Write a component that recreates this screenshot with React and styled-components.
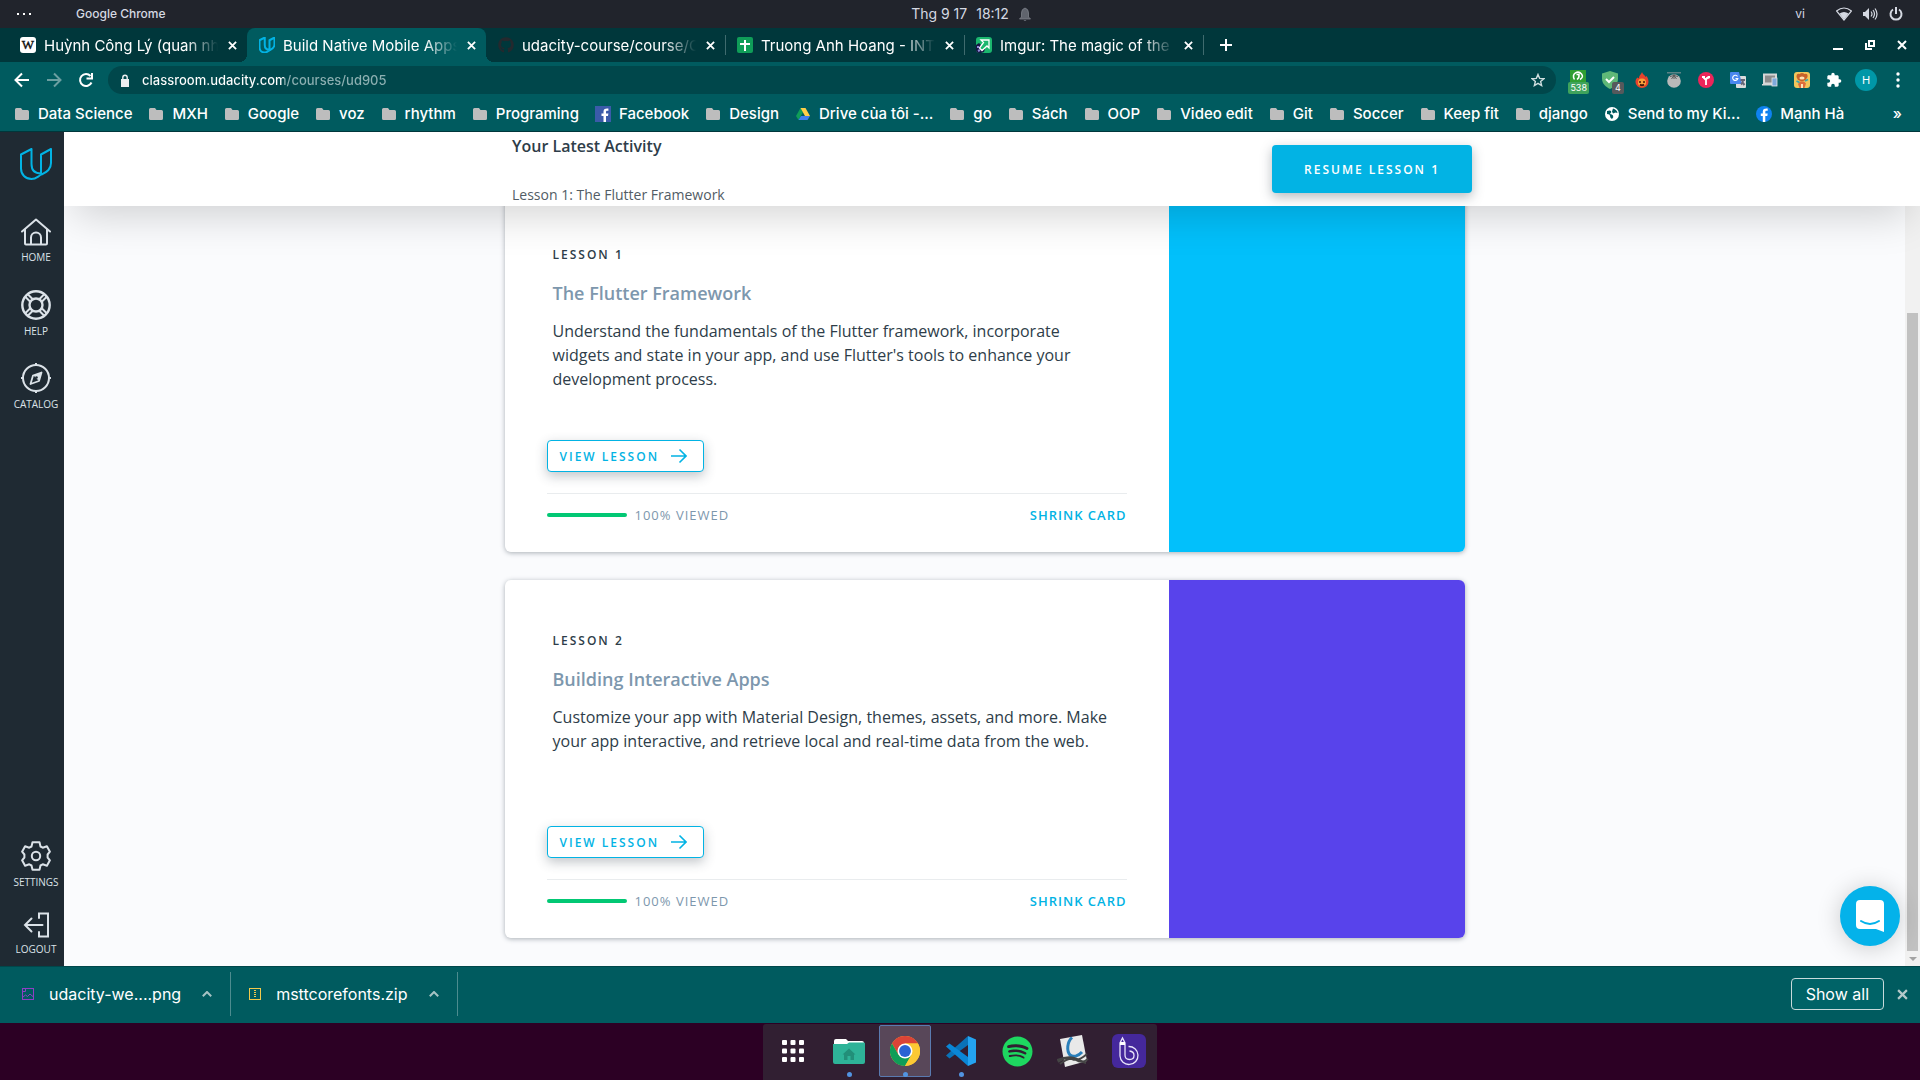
import React from "react";
import styled, { createGlobalStyle, css } from "styled-components";
import { FaGithub, FaSpotify } from "react-icons/fa";

const teal = "#005b5f";
const ui = `Inter, "Noto Sans", sans-serif`;
const body = `"Open Sans", "Noto Sans", sans-serif`;

const Global = createGlobalStyle`
  * { box-sizing: border-box; }
  body { margin: 0; background: #2c0024; font-family: ${ui}; }
  button, input { font: inherit; color: inherit; border: 0; padding: 0; margin: 0; background: none; }
  a { color: inherit; text-decoration: none; }
  h2, h3, p { margin: 0; }
  svg { display: block; flex: none; }
`;

const Screen = styled.div`
  display: flex;
  flex-direction: column;
  height: 100vh;
  min-height: 640px;
  overflow: hidden;
`;

/* ---------- desktop top bar ---------- */
const TopBar = styled.header`
  display: grid;
  grid-template-columns: 1fr auto 1fr;
  align-items: center;
  height: 28px;
  flex: none;
  padding: 0 17px 0 16px;
  background: #21242c;
  color: #d5d9e2;
  font-size: 12px;
  line-height: 16px;
`;
const TopGroup = styled.div`
  display: flex;
  align-items: center;
  gap: 11px;
  justify-content: ${(p) => p.$align || "flex-start"};
`;
const Clock = styled.div`
  display: flex;
  align-items: center;
  gap: 9px;
  padding-left: 24px;
  font-size: 14px;
`;
const AppName = styled.span`
  margin-left: 33px;
  font-weight: 500;
`;
const Locale = styled.span`
  margin-right: 20px;
`;

/* ---------- tab strip ---------- */
const TabStrip = styled.nav`
  display: flex;
  align-items: center;
  height: 34px;
  flex: none;
  padding: 0 10px 0 8px;
  background: #00373b;
  color: #fff;
`;
const flare = css`
  content: "";
  position: absolute;
  bottom: 0;
  width: 8px;
  height: 8px;
`;
const Tab = styled.div`
  position: relative;
  display: flex;
  align-items: center;
  gap: 8px;
  width: 239px;
  height: 34px;
  padding: 0 9px 0 12px;
  border-radius: 8px 8px 0 0;
  background: ${(p) => (p.$active ? teal : "transparent")};
  ${(p) =>
    p.$active &&
    css`
      &::before { ${flare} left: -8px; background: radial-gradient(circle at 0 0, transparent 8px, ${teal} 8px); }
      &::after { ${flare} right: -8px; background: radial-gradient(circle at 100% 0, transparent 8px, ${teal} 8px); }
    `}
`;
const TabTitle = styled.a`
  flex: 1;
  min-width: 0;
  padding-top: 2px;
  overflow: hidden;
  white-space: nowrap;
  font-size: 15px;
  line-height: 22px;
  mask-image: linear-gradient(to right, #000 calc(100% - 32px), transparent);
`;
const IconButton = styled.button`
  display: grid;
  place-items: center;
  flex: none;
  width: ${(p) => p.$w || 16}px;
  height: 16px;
  color: ${(p) => p.$color || "#fff"};
`;
const Separator = styled.span`
  width: 1px;
  height: 20px;
  flex: none;
  margin-right: -1px;
  background: #3f6b6e;
`;
const NewTab = styled(IconButton)`
  margin-left: 15px;
`;
const WindowButtons = styled.div`
  display: flex;
  gap: 16px;
  margin-left: auto;
`;

/* ---------- toolbar ---------- */
const Toolbar = styled.div`
  display: flex;
  align-items: center;
  height: 34px;
  flex: none;
  padding: 2px 10px 0 14px;
  background: ${teal};
  color: #fff;
`;
const NavButtons = styled.div`
  display: flex;
  gap: 16px;
  margin-right: 14px;
`;
const Omnibox = styled.label`
  display: flex;
  align-items: center;
  flex: 1;
  height: 28px;
  padding: 0 10px 0 12px;
  gap: 12px;
  border-radius: 14px;
  background: #00474b;
`;
const Address = styled.input`
  flex: 1;
  min-width: 0;
  outline: none;
  font-size: 13px;
  font-weight: 500;
  line-height: 20px;
  color: transparent;
  background: linear-gradient(to right, #fff 142px, #8db0b2 142px);
  background-clip: text;
  -webkit-background-clip: text;
`;
const Extensions = styled.div`
  display: flex;
  align-items: center;
  gap: 8px;
  margin-left: 10px;
`;
const Ext = styled.button`
  position: relative;
  display: grid;
  place-items: center;
  width: 24px;
  height: 28px;
`;
const Badge = styled.span`
  position: absolute;
  right: ${(p) => p.$right}px;
  bottom: 0;
  padding: 0 2px;
  min-width: 12px;
  border-radius: 2px;
  background: ${(p) => p.$bg};
  color: #fff;
  font-size: 9px;
  line-height: 12px;
`;
const Avatar = styled.span`
  display: grid;
  place-items: center;
  width: 22px;
  height: 22px;
  border-radius: 50%;
  background: #0097a7;
  font-size: 11px;
`;

/* ---------- bookmarks ---------- */
const Bookmarks = styled.nav`
  display: flex;
  align-items: center;
  gap: 16px;
  height: 36px;
  flex: none;
  padding: 0 18px 0 14px;
  background: ${teal};
  border-bottom: 1px solid #00373b;
  color: #fff;
  font-size: 15px;
  font-weight: 500;
  line-height: 20px;
`;
const Bookmark = styled.a`
  display: flex;
  align-items: center;
  gap: 8px;
  white-space: nowrap;
`;
const More = styled.button`
  margin-left: auto;
`;

/* ---------- page ---------- */
const Page = styled.div`
  display: grid;
  grid-template-columns: 64px minmax(0, 1fr);
  flex: 1;
  min-height: 0;
  overflow: hidden;
  position: relative;
  background: #fafbfd;
  font-family: ${body};
  color: #2e3d49;
`;
const Sidebar = styled.nav`
  position: relative;
  z-index: 3;
  display: flex;
  flex-direction: column;
  align-items: center;
  padding: 16px 0 11px 8px;
  background: #1f2a33;
  color: #dbe2e8;
`;
const Logo = styled.a`
  margin-bottom: 38px;
`;
const SideLink = styled.a`
  display: flex;
  flex-direction: column;
  align-items: center;
  gap: 5px;
  margin-bottom: ${(p) => p.$gap || 0}px;
  font-size: 10px;
  line-height: 12px;
`;
const Spacer = styled.span`
  flex: 1;
`;
const Main = styled.main`
  display: flex;
  flex-direction: column;
  min-height: 0;
  min-width: 0;
`;
const Activity = styled.section`
  position: relative;
  z-index: 2;
  height: 74px;
  flex: none;
  background: #fff;
  box-shadow: 0 20px 40px -10px rgba(0, 0, 0, 0.17);
`;
const ActivityInner = styled.div`
  display: flex;
  justify-content: space-between;
  align-items: center;
  max-width: 960px;
  height: 100%;
  margin: 0 auto;
`;
const ActivityText = styled.div`
  display: flex;
  flex-direction: column;
  justify-content: space-between;
  height: 100%;
  padding-top: 2px;
`;
const ActivityTitle = styled.h2`
  font-size: 16px;
  font-weight: 600;
  line-height: 24px;
`;
const ActivityLesson = styled.p`
  color: #525c65;
  font-size: 14px;
  line-height: 22px;
`;
const Resume = styled.button`
  height: 48px;
  padding: 0 32px;
  border-radius: 4px;
  background: #02b3e4;
  color: #fff;
  font-size: 12px;
  font-weight: 600;
  letter-spacing: 2px;
  box-shadow: 0 4px 12px rgba(46, 61, 73, 0.35);
`;
const Body = styled.div`
  display: flex;
  flex: 1;
  min-height: 0;
`;
const Lessons = styled.div`
  display: flex;
  flex: 1;
  flex-direction: column;
  justify-content: flex-end;
  align-items: center;
  gap: 28px;
  padding-bottom: 28px;
`;
const Card = styled.article`
  display: grid;
  grid-template-columns: minmax(0, 1fr) 296px;
  flex: none;
  width: 100%;
  max-width: 960px;
  border-radius: 6px;
  overflow: hidden;
  background: #fff;
  box-shadow: 0 1px 5px rgba(46, 61, 73, 0.4);
`;
const CardBody = styled.div`
  padding: 52px 42px 27px;
`;
const CardText = styled.div`
  padding: 0 12px 0 6px;
`;
const Overline = styled.p`
  font-size: 12px;
  font-weight: 600;
  letter-spacing: 2px;
  line-height: 18px;
`;
const Title = styled.h3`
  margin: 17px 0 14px;
  color: #7d97ad;
  font-size: 18px;
  font-weight: 600;
  line-height: 24px;
`;
const Desc = styled.p`
  min-height: 72px;
  font-size: 16px;
  line-height: 24px;
`;
const ViewButton = styled.button`
  display: flex;
  align-items: center;
  gap: 12px;
  height: 32px;
  margin: 49px 0 21px;
  padding: 0 16px 0 12px;
  border: 1px solid #02b3e4;
  border-radius: 4px;
  background: #fff;
  color: #02b3e4;
  font-size: 12px;
  font-weight: 600;
  letter-spacing: 2px;
  box-shadow: 0 4px 12px rgba(46, 61, 73, 0.3);
`;
const CardFoot = styled.div`
  display: flex;
  align-items: center;
  gap: 8px;
  padding-top: 11px;
  border-top: 1px solid #e9ecee;
  font-size: 13px;
  line-height: 20px;
`;
const Track = styled.div`
  width: 80px;
  height: 4px;
  border-radius: 2px;
  overflow: hidden;
  background: #dbe2e8;
`;
const Fill = styled.div`
  height: 100%;
  background: #02c874;
`;
const Viewed = styled.span`
  color: #7d97ad;
  letter-spacing: 1px;
`;
const Shrink = styled.button`
  margin-left: auto;
  color: #02b3e4;
  font-weight: 600;
  letter-spacing: 1px;
`;
const Swatch = styled.div`
  background: ${(p) => p.$c};
`;
const Scrollbar = styled.div`
  display: flex;
  flex-direction: column;
  align-items: center;
  justify-content: flex-end;
  width: 15px;
  flex: none;
  background: #f1f1f1;
`;
const Thumb = styled.div`
  width: 11px;
  height: 84%;
  background: #c1c1c1;
`;
const ScrollArrow = styled.span`
  display: grid;
  place-items: center;
  height: 15px;
`;
const Chat = styled.button`
  position: absolute;
  right: 20px;
  bottom: 20px;
  z-index: 3;
  display: grid;
  place-items: center;
  width: 60px;
  height: 60px;
  border-radius: 50%;
  background: #04b2ea;
  box-shadow: 0 2px 24px rgba(0, 0, 0, 0.2);
`;

/* ---------- downloads ---------- */
const Downloads = styled.section`
  display: flex;
  align-items: center;
  height: 57px;
  flex: none;
  padding: 0 10px 2px 22px;
  background: ${teal};
  border-top: 1px solid #00474b;
  color: #fff;
  font-size: 16px;
  line-height: 24px;
`;
const Download = styled.div`
  display: flex;
  align-items: center;
  gap: 15px;
  height: 44px;
  margin-right: 18px;
  padding-right: 15px;
  border-right: 1px solid #4d8c8f;
`;
const FileName = styled.a`
  margin-right: 3px;
`;
const ShowAll = styled.button`
  height: 32px;
  margin-left: auto;
  margin-right: 10px;
  padding: 0 14px;
  border: 1px solid #c7dadb;
  border-radius: 4px;
  background: #006367;
`;

/* ---------- dock ---------- */
const DockBar = styled.footer`
  display: flex;
  justify-content: center;
  height: 57px;
  flex: none;
  padding-top: 1px;
  background: #2c0024;
`;
const Dock = styled.div`
  display: flex;
  gap: 4px;
  padding: 1px 2px 0 4px;
  border-radius: 3px 3px 0 0;
  background: #311f32;
`;
const DockItem = styled.button`
  position: relative;
  display: grid;
  place-items: center;
  width: 52px;
  height: 52px;
  border: 1px solid ${(p) => (p.$active ? "#5a7ab0" : "transparent")};
  border-radius: 2px;
  background: ${(p) => (p.$active ? "#584759" : "transparent")};
  &::after {
    content: "";
    display: ${(p) => (p.$running ? "block" : "none")};
    position: absolute;
    bottom: -1px;
    width: 5px;
    height: 5px;
    border-radius: 50%;
    background: #5294e2;
  }
`;

/* ---------- drawings ---------- */
const S = ({ w = 16, h = w, vb, children, sw = 2, ...rest }) => (
  <svg width={w} height={h} viewBox={vb || `0 0 ${w} ${h}`} fill="none" stroke="currentColor" strokeWidth={sw} aria-hidden="true" {...rest}>
    {children}
  </svg>
);
const F = (props) => <S {...props} stroke="none" />;

const Cross = ({ s = 8, sw = 2 }) => <S w={s} sw={sw} vb="0 0 8 8"><path d="M.8.8l6.4 6.4M7.2.8L.8 7.2" /></S>;
const Folder = () => <F><path d="M1 3.500Q1 2 2.500 2H7l1.500 2H13.500Q15 4 15 5.500V12.500Q15 14 13.500 14H2.500Q1 14 1 12.500z" fill="#bdbdbd" /></F>;
const UMark = ({ w = 32, sw = 2 }) => (
  <S w={w} vb="0 0 32 32" sw={sw} stroke="#02b3e4" strokeLinejoin="round">
    <path d="M1 6.500L11.500 1V16C11.500 22 15 25.500 21 25.500V6.500L31 1V15C31 22 26 24 21.500 26.500C17 29 16 31 11.500 31C5.500 31 1 26.500 1 20.500Z" />
  </S>
);
const Wiki = () => (
  <F>
    <rect width="16" height="16" rx="3" fill="#fff" />
    <text x="8" y="12" textAnchor="middle" fontFamily="Liberation Serif, serif" fontSize="13" stroke="#111" strokeWidth=".4" fill="#111">W</text>
  </F>
);
const Sheet = () => <F><rect width="16" height="16" rx="2" fill="#0f9d58" /><path d="M7 3h2v3h4v2H9v6H7V8H3V6h4z" fill="#fff" /></F>;
const Imgur = () => (
  <F>
    <rect width="16" height="16" rx="3" fill="#1bb76e" />
    <path d="M0 8l3-2 2 2 4 4-1 3-3 1H3q-3 0-3-3z" fill="#171544" />
    <path d="M5 3h8v8l-2-2-5 4.500L3.500 11 7.500 5.500z" fill="#1bb76e" stroke="#fff" strokeWidth="1.300" />
    <path d="M1 10h2M2 14l2-1" stroke="#8f8bd8" />
  </F>
);
const FbSquare = () => <F><rect width="16" height="16" fill="#3b5ba9" /><path d="M11 16V10h2l.4-2.500H11V6c0-.8.4-1.200 1.200-1.200h1.200V2.600C12 2.300 8.500 2.200 8.500 5.500v2H6.500V10h2v6z" fill="#fff" /></F>;
const FbRound = () => <F><circle cx="8" cy="8" r="8" fill="#0f82f0" /><path d="M9.300 16V10h2l.4-2.500H9.300V6c0-.8.4-1.200 1.200-1.200h1.200V2.600C10.300 2.300 6.800 2.200 6.800 5.500v2H4.800V10h2v6z" fill="#fff" /></F>;
const Drive = () => (
  <F>
    <path d="M5.500 2L8 6.200 3.500 14 1 10z" fill="#0f9d58" />
    <path d="M5.500 2h5L15 10h-5z" fill="#ffcf48" />
    <path d="M6 10h9l-2.500 4h-9z" fill="#3f7ff0" />
  </F>
);
const Globe = () => <F><circle cx="8" cy="8" r="7" fill="#fff" /><path d="M3 5q3-1 4 0t-1 3q2 0 3 1.500T8 13Q6 12 6 10T3 8zM9 2.500q4 1 4.500 4.500l-2-.5-2.500 1-1-2z" fill={teal} /></F>;

const Gauge = () => (
  <F w={20} h={22}>
    <rect x="2" y="1" width="16" height="12" fill="#2f9e32" />
    <g stroke="#fff" strokeWidth="1.500" fill="none"><path d="M6.500 10.500Q4 6 7.500 3.800Q11 2 13.500 5t-1.500 5.500M8.500 5.500h2.500q.5 3-2 5" /></g>
  </F>
);
const Shield = () => <F w={18} vb="0 0 18 18"><path d="M9 0l8 2.500v5C17 13 13 16 9 18 5 16 1 13 1 7.500v-5z" fill="#5fb878" /><path d="M5 8l3 3 5-5" stroke="#fff" strokeWidth="2" fill="none" /></F>;
const Flame = () => (
  <F>
    <path d="M8 0c1 3 3 3 3.500 5l1-1C14 6 14.500 8 14.500 10a6.500 6 0 0 1-13 0c0-2 .5-3 2-4.500L5 6.500C5 3 7 3 8 0z" fill="#e8412b" />
    <circle cx="8" cy="10.500" r="4" fill="#f9a13a" /><circle cx="6" cy="10" r="1" fill="#40140b" /><circle cx="10" cy="10" r="1" fill="#40140b" />
    <path d="M6 12.500q2 1.500 4 0" stroke="#40140b" fill="none" />
  </F>
);
const Tomato = () => <F w={16}><path d="M1 .5h14" stroke="#5b8386" /><circle cx="8" cy="9" r="6.800" fill="#b9b9b9" /><path d="M8 2v5M4 4.500l4-1 4 1M5.500 7L8 3.500 10.500 7" stroke="#555" strokeWidth=".9" fill="none" /></F>;
const Pink = () => <F><circle cx="8" cy="8" r="8" fill="#ec255a" /><path d="M8 13V7.500M8 8L5.500 5.500M8 8q0-2.500 3.500-2.500M4 5h3M9.500 5h2.500" stroke="#fff" strokeWidth="1.800" fill="none" /></F>;
const Translate = () => (
  <F>
    <rect x="6" y="4" width="10" height="12" rx="1" fill="#dcdcdc" /><path d="M0 1q0-1 1-1h8l3 12H1q-1 0-1-1z" fill="#4a87ee" />
    <path d="M7.500 4.500A2.600 2.600 0 1 0 7.800 6.500H5.500" stroke="#fff" strokeWidth="1.200" fill="none" /><path d="M10.500 8h4.500M13 7v1q0 3-2 4.500M12 10l2.500 3" stroke="#667" fill="none" />
  </F>
);
const Devices = () => <F><rect x="2" y="2.500" width="12" height="9" fill="#8c8c8c" stroke="#d6d6d6" /><path d="M0 12h10v1.500H0z" fill="#d6d6d6" /><rect x="10" y="6" width="5" height="8" fill="#7ea9dc" stroke="#e5e5e5" strokeWidth=".8" /></F>;
const Character = () => (
  <F>
    <rect width="16" height="16" rx="3" fill="#f1c65b" />
    <path d="M2.500 5q0-4 3-3 2.500-2 5 0 3.500-1 3 3l-2 3-3.500 1.500L4 8z" fill="#c8622a" /><ellipse cx="8" cy="6" rx="2.600" ry="1.500" fill="#ffe3b5" />
    <path d="M6 9.500h4l2 2-1.500 4.500h-5L4 12z" fill="#dd6d3d" /><path d="M11 9l3-1.500M2.500 9l3 1.500" stroke="#39a6ad" strokeWidth="1.800" /><path d="M7 12h2v4H7z" fill="#ffe3b5" />
  </F>
);
const Puzzle = () => <F vb="0 0 24 24"><path fill="#fff" d="M20.500 11H19V7c0-1.100-.9-2-2-2h-4V3.500a2.500 2.500 0 0 0-5 0V5H4C2.900 5 2 5.900 2 7v3.800h1.500a2.700 2.700 0 0 1 0 5.400H2V20c0 1.100.9 2 2 2h3.800v-1.500a2.700 2.700 0 0 1 5.400 0V22H17c1.100 0 2-.9 2-2v-4h1.500a2.500 2.500 0 0 0 0-5z" /></F>;

const Home = () => <S w={30} h={28}><path d="M1 13.500L15 1.500l14 12M4 11.500V25.500q0 1 1 1H25q1 0 1-1V11.500M10 26V19.500a5 5 0 0 1 10 0V26" strokeLinejoin="round" strokeLinecap="round" /></S>;
const Help = () => <S w={30}><circle cx="15" cy="15" r="13.700" strokeWidth="2.400" /><circle cx="15" cy="15" r="6.500" strokeWidth="2.400" /><path d="M4.500 7l5 5M7 4.500l5 5M23 4.500l-5 5M25.500 7l-5 5M4.500 23l5-5M7 25.500l5-5M23 25.500l-5-5M25.500 23l-5-5" /></S>;
const Compass = () => <S w={30}><circle cx="15" cy="15" r="13" /><path d="M15 0v3M15 27v3M0 15h3M27 15h3" /><path d="M20.500 9.500l-2.500 8.500-8.500 3 2.500-8.500z" strokeWidth="1.800" strokeLinejoin="round" /><path d="M20.500 9.500l-8 3 5 5z" fill="currentColor" stroke="none" /><circle cx="15.500" cy="14.500" r="1.300" fill="#1f2a33" stroke="none" /></S>;
const Gear = () => (
  <S w={30}>
    <path strokeLinejoin="round" d="M11.500 1.200h7l1 4.300 2.200 1.200 4.200-1.400 3 5.400-2.300 2.800v3l2.300 2.800-3 5.400-4.200-1.400-2.200 1.200-1 4.300h-7l-1-4.300-2.200-1.200-4.200 1.400-3-5.400 2.300-2.800v-3L1.100 10.700l3-5.400 4.200 1.400 2.200-1.200z" />
    <circle cx="15" cy="15" r="4.200" />
  </S>
);
const Logout = () => <S w={26}><path d="M16 6V1.500h9v23h-9V20M19.500 13H2M8.500 6.500L2 13l6.500 6.500" strokeLinecap="round" /></S>;

const ImageFile = () => <S w={12} sw={1} stroke="#8f3fc4"><rect x=".5" y=".5" width="11" height="11" /><path d="M1 9l2.500-2 2 1.500L8 6l3.500 3M1 3.500h2.500V1" /></S>;
const ZipFile = () => <S w={12} sw={1} stroke="#f2c94c"><rect x=".5" y=".5" width="11" height="11" /><path d="M6 2v7" strokeDasharray="1 1" strokeWidth="2" /></S>;

const AppsGrid = () => <F w={22}>{[0, 1, 2].flatMap((r) => [0, 1, 2].map((c) => <rect key={`${r}${c}`} x={c * 8.5} y={r * 8.5} width="5" height="5" rx="1" fill="#fff" />))}</F>;
const Files = () => (
  <F w={34} h={26}>
    <path d="M2 3q0-2 2-2h10l2 2h14q2 0 2 2v4H2z" fill="#fff" /><path d="M1 6h14l2-1.500h15q1 0 1 1V24q0 2-2 2H3q-2 0-2-2z" fill="#2eb398" />
    <path d="M17 10.500l6.500 6H22V22h-3.500v-4h-3v4H12v-5.500h-1.500z" fill="#228f79" />
  </F>
);
const ChromeIcon = () => (
  <F w={30} vb="0 0 48 48">
    <circle cx="24" cy="24" r="24" fill="#fcc934" />
    <path d="M3.200 12A24 24 0 0 1 44.800 12H24L13.600 30z" fill="#db4437" />
    <path d="M3.200 12A24 24 0 0 0 24 48L34.400 30 13.600 30z" fill="#0f9d58" />
    <path d="M24 12H44.800A24 24 0 0 1 24 48L34.400 30z" fill="#fcc934" />
    <circle cx="24" cy="24" r="12" fill="#fff" /><circle cx="24" cy="24" r="9.500" fill="#2a63d4" />
  </F>
);
const Code = () => (
  <F w={30} vb="0 0 30 30">
    <path d="M22 0l8 3.500v23L22 30z" fill="#24a3f0" /><path d="M22 0v9L3.500 22.500 0 19.500z" fill="#0a72b8" /><path d="M0 10.500l3.500-3L22 21v9z" fill="#0a86d6" />
  </F>
);
const Notebook = () => (
  <F w={32} h={34}>
    <path d="M3 5l22-4 5 26-22 6z" fill="#e9e9e9" />
    <path d="M15 3.500C10 8 9.500 17 13 21c3 2.500 8 1.500 12-3" stroke="#2a7fba" strokeWidth="3" fill="none" />
    <path d="M1 28q8-6 14-3t15-5M3 30q10-8 16-4t12-1M0 26q12-5 20-1t9 4" stroke="#444" fill="none" />
  </F>
);
const Pen = () => (
  <F w={34}>
    <rect width="34" height="34" rx="6" fill="#45289c" />
    <path d="M8 22V9l2.500-5L13 9v12q0 4.500 4.500 4.500T22 21.500 17.500 17M16.500 12.500A9 9 0 1 1 8 22" fill="none" stroke="#e9e4fa" strokeWidth="1.300" /><path d="M8 8h5v3H8z" fill="#fff" />
  </F>
);

const tabs = [
  { icon: <Wiki />, title: "Huỳnh Công Lý (quan nh" },
  { icon: <UMark w={16} sw={4} />, title: "Build Native Mobile Apps", active: true },
  { icon: <FaGithub size={16} color="#24292e" />, title: "udacity-course/course/C" },
  { icon: <Sheet />, title: "Truong Anh Hoang - INT", sep: true },
  { icon: <Imgur />, title: "Imgur: The magic of the", sep: true },
];
const bookmarks = [
  ["Data Science"], ["MXH"], ["Google"], ["voz"], ["rhythm"], ["Programing"], ["Facebook", <FbSquare />], ["Design"],
  ["Drive của tôi -...", <Drive />], ["go"], ["Sách"], ["OOP"], ["Video edit"], ["Git"], ["Soccer"], ["Keep fit"], ["django"],
  ["Send to my Ki...", <Globe />], ["Mạnh Hà", <FbRound />],
];
const extensions = [
  { name: "Speed", icon: <Gauge />, badge: "538", bg: "#3fa35c", right: 1 },
  { name: "Shield", icon: <Shield />, badge: "4", bg: "#56595c", right: -2 },
  { name: "Flame", icon: <Flame /> }, { name: "Tomato", icon: <Tomato /> }, { name: "Pink", icon: <Pink /> },
  { name: "Translate", icon: <Translate /> }, { name: "Devices", icon: <Devices /> }, { name: "Character", icon: <Character /> },
  { name: "Extensions", icon: <Puzzle /> },
];
const lessons = [
  { n: 1, title: "The Flutter Framework", viewed: 100, color: "#02c0fb", text: "Understand the fundamentals of the Flutter framework, incorporate widgets and state in your app, and use Flutter's tools to enhance your development process." },
  { n: 2, title: "Building Interactive Apps", viewed: 100, color: "#5843eb", text: "Customize your app with Material Design, themes, assets, and more. Make your app interactive, and retrieve local and real-time data from the web." },
];
const dock = [
  { name: "Show applications", icon: <AppsGrid /> },
  { name: "Files", icon: <Files />, running: true },
  { name: "Chrome", icon: <ChromeIcon />, running: true, active: true },
  { name: "Code", icon: <Code />, running: true },
  { name: "Spotify", icon: <FaSpotify size={31} color="#1ed760" /> },
  { name: "Notes", icon: <Notebook /> },
  { name: "Bamboo", icon: <Pen /> },
];

function LessonCard({ lesson }) {
  return (
    <Card>
      <CardBody>
        <CardText>
          <Overline>LESSON {lesson.n}</Overline>
          <Title>{lesson.title}</Title>
          <Desc>{lesson.text}</Desc>
        </CardText>
        <ViewButton>
          VIEW LESSON
          <S w={16} sw={1.6}><path d="M0 8h15M8.500 1.500L15 8l-6.500 6.500" /></S>
        </ViewButton>
        <CardFoot>
          <Track><Fill style={{ width: `${lesson.viewed}%` }} /></Track>
          <Viewed>{lesson.viewed}% VIEWED</Viewed>
          <Shrink>SHRINK CARD</Shrink>
        </CardFoot>
      </CardBody>
      <Swatch $c={lesson.color} />
    </Card>
  );
}

export default function App() {
  return (
    <Screen>
      <Global />
      <TopBar>
        <TopGroup>
          <F w={16} h={4}><path d="M1 1h2v2H1zM7 1h2v2H7zM13 1h2v2h-2z" fill="#fff" /></F>
          <AppName>Google Chrome</AppName>
        </TopGroup>
        <Clock>
          <span>Thg 9 17</span>
          <span>18:12</span>
          <F w={14}><path d="M7 1q3.500 1 3.500 5v4l2 2H1.500l2-2V6Q3.500 2 7 1z" fill="#60646d" stroke="#7d818a" strokeWidth=".8" /><path d="M5.500 13h3l-1.500 1z" fill="#7d818a" /></F>
        </Clock>
        <TopGroup $align="flex-end">
          <Locale>vi</Locale>
          <F><path d="M8 14L.5 5q7.500-6 15 0z" fill="none" stroke="#d5d9e2" strokeWidth="1.200" /><path d="M8 13.500L3.500 7.500q4.500-3 9 0z" fill="#d5d9e2" /></F>
          <F w={15} h={14}><path d="M0 5h2l4-4v12L2 9H0z" fill="#d5d9e2" /><path d="M8 4.500q2 2.500 0 5M10 3q3 4 0 8M12 1.500q4 5.500 0 11" stroke="#d5d9e2" strokeWidth="1.200" fill="none" /></F>
          <S w={14}><path d="M4 2.500a5.500 5.500 0 1 0 6 0M7 0v7" /></S>
        </TopGroup>
      </TopBar>

      <TabStrip>
        {tabs.map((t) => (
          <React.Fragment key={t.title}>
            {t.sep && <Separator />}
            <Tab $active={t.active}>
              {t.icon}
              <TabTitle href="#">{t.title}</TabTitle>
              <IconButton $w={12} aria-label="Close tab"><Cross s={9} sw={1.6} /></IconButton>
            </Tab>
          </React.Fragment>
        ))}
        <Separator />
        <NewTab aria-label="New tab"><S w={12}><path d="M6 0v12M0 6h12" /></S></NewTab>
        <WindowButtons>
          <IconButton aria-label="Minimize"><F w={10}><path d="M0 8h10v2H0z" fill="#fff" /></F></IconButton>
          <IconButton aria-label="Restore"><S w={10}><path d="M4 1h5v5H4zM1 3v6h6" /></S></IconButton>
          <IconButton aria-label="Close"><Cross s={10} sw={1.6} /></IconButton>
        </WindowButtons>
      </TabStrip>

      <Toolbar>
        <NavButtons>
          <IconButton aria-label="Back"><S><path d="M15 8H2M8 1.500L1.500 8 8 14.500" /></S></IconButton>
          <IconButton aria-label="Forward" $color="#6b9fa1"><S><path d="M1 8h13M8 1.500L14.500 8 8 14.500" /></S></IconButton>
          <IconButton aria-label="Reload"><S><path d="M13.500 10.500A6 6 0 1 1 12.500 4M14 1v5.500H8.500" /></S></IconButton>
        </NavButtons>
        <Omnibox>
          <F w={10} h={13}><path d="M1 5h8v8H1z" fill="#eceff1" /><path d="M2.800 6V3.500a2.200 2.200 0 0 1 4.400 0V6" stroke="#eceff1" strokeWidth="1.400" fill="none" /></F>
          <Address aria-label="Address" defaultValue="classroom.udacity.com/courses/ud905" />
          <IconButton type="button" aria-label="Bookmark this page" $color="#cfdedf"><S w={14} vb="0 0 24 24" sw={2.4}><path d="M12 2.500l2.800 6.700 7.200.6-5.500 4.700 1.700 7L12 17.700l-6.200 3.800 1.700-7L2 9.800l7.200-.6z" /></S></IconButton>
        </Omnibox>
        <Extensions>
          {extensions.map((e) => (
            <Ext key={e.name} aria-label={e.name}>
              {e.icon}
              {e.badge && <Badge $bg={e.bg} $right={e.right}>{e.badge}</Badge>}
            </Ext>
          ))}
          <Ext aria-label="Profile"><Avatar>H</Avatar></Ext>
          <Ext aria-label="Menu"><F w={4} h={16}><circle cx="2" cy="2" r="1.700" fill="#fff" /><circle cx="2" cy="8" r="1.700" fill="#fff" /><circle cx="2" cy="14" r="1.700" fill="#fff" /></F></Ext>
        </Extensions>
      </Toolbar>

      <Bookmarks>
        {bookmarks.map(([name, icon]) => (
          <Bookmark key={name} href="#">{icon || <Folder />}{name}</Bookmark>
        ))}
        <More>»</More>
      </Bookmarks>

      <Page>
        <Sidebar>
          <Logo href="#" aria-label="Udacity"><UMark /></Logo>
          <SideLink href="#" $gap={27}><Home />HOME</SideLink>
          <SideLink href="#" $gap={26}><Help />HELP</SideLink>
          <SideLink href="#"><Compass />CATALOG</SideLink>
          <Spacer />
          <SideLink href="#" $gap={24}><Gear />SETTINGS</SideLink>
          <SideLink href="#"><Logout />LOGOUT</SideLink>
        </Sidebar>
        <Main>
          <Activity>
            <ActivityInner>
              <ActivityText>
                <ActivityTitle>Your Latest Activity</ActivityTitle>
                <ActivityLesson>Lesson 1: The Flutter Framework</ActivityLesson>
              </ActivityText>
              <Resume>RESUME LESSON 1</Resume>
            </ActivityInner>
          </Activity>
          <Body>
            <Lessons>
              {lessons.map((l) => <LessonCard key={l.n} lesson={l} />)}
            </Lessons>
            <Scrollbar>
              <Thumb />
              <ScrollArrow><F w={8} h={4}><path d="M0 0h8L4 4z" fill="#a3a3a3" /></F></ScrollArrow>
            </Scrollbar>
          </Body>
        </Main>
        <Chat aria-label="Open chat">
          <F w={28} h={32}><path d="M4 0h20q4 0 4 4v28l-8-3H4q-4 0-4-4V4q0-4 4-4z" fill="#fff" /><path d="M5 21q9 6 18 0" stroke="#04b2ea" strokeWidth="2" strokeLinecap="round" fill="none" /></F>
        </Chat>
      </Page>

      <Downloads>
        <Download>
          <ImageFile />
          <FileName href="#">udacity-we....png</FileName>
          <IconButton aria-label="File options" $color="#a6c3c4"><S w={10} h={6}><path d="M.8 5.200L5 1l4.200 4.200" /></S></IconButton>
        </Download>
        <Download>
          <ZipFile />
          <FileName href="#">msttcorefonts.zip</FileName>
          <IconButton aria-label="File options" $color="#a6c3c4"><S w={10} h={6}><path d="M.8 5.200L5 1l4.200 4.200" /></S></IconButton>
        </Download>
        <ShowAll>Show all</ShowAll>
        <IconButton aria-label="Close downloads" $color="#b5c9ca"><Cross s={11} sw={1.6} /></IconButton>
      </Downloads>

      <DockBar>
        <Dock>
          {dock.map((d) => (
            <DockItem key={d.name} aria-label={d.name} $running={d.running} $active={d.active}>{d.icon}</DockItem>
          ))}
        </Dock>
      </DockBar>
    </Screen>
  );
}
